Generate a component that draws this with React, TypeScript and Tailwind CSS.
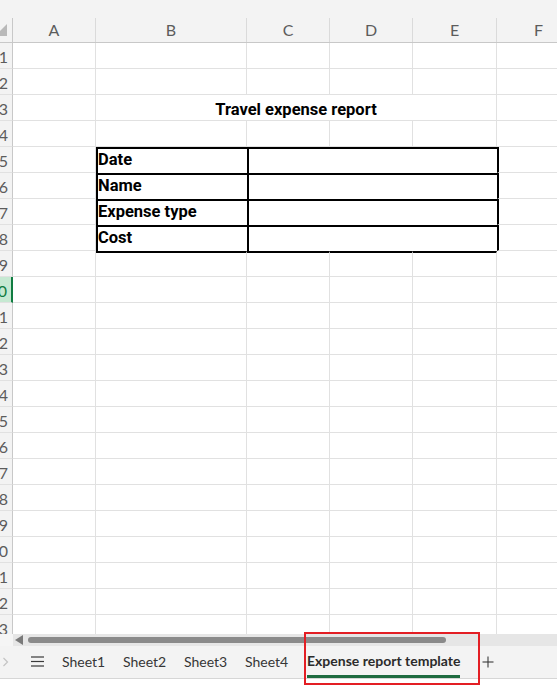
import React from 'react'

// grid geometry (px): row header 13, then A..F
const columns = [
  { letter: 'A', w: 'w-[83px]' },
  { letter: 'B', w: 'w-[151px]' },
  { letter: 'C', w: 'w-[83px]' },
  { letter: 'D', w: 'w-[83px]' },
  { letter: 'E', w: 'w-[84px]' },
  { letter: 'F', w: 'w-[84px]' },
]

const labels: { [row: number]: string } = { 5: 'Date', 6: 'Name', 7: 'Expense type', 8: 'Cost' }

const grid = 'shrink-0 h-full border-b border-r border-[#e1e1e1]'
const cellFont = "font-['Roboto',sans-serif] text-[16.5px] font-bold leading-[20px] text-black"

function RowHead({ n }: { n: number }) {
  const selected = n === 10
  return (
    <div
      className={
        'shrink-0 w-[13px] h-full border-b border-[#e1e1e1] flex items-end justify-end overflow-hidden pb-[3px] pr-[4px] ' +
        (selected
          ? 'bg-[#c6e9d2] text-[#107c41] border-r-2 border-r-[#107c41]'
          : 'bg-[#f3f3f3] text-[#5c5c5c] border-r border-r-[#c8c8c8]')
      }
    >
      <span className="font-['Segoe_UI',Lato,sans-serif] text-[16px] leading-4 whitespace-nowrap">{n}</span>
    </div>
  )
}

function Row({ n }: { n: number }) {
  if (n === 3) {
    return (
      <div className="flex h-[26px]">
        <RowHead n={n} />
        <div className={grid + ' w-[83px]'} />
        <div className={grid + ' w-[401px] flex items-end justify-center'}>
          <span className={cellFont}>Travel expense report</span>
        </div>
        <div className={grid + ' w-[84px]'} />
      </div>
    )
  }

  if (labels[n]) {
    return (
      <div className="flex h-[26px]">
        <RowHead n={n} />
        <div className={grid + ' w-[83px]'} />
        <div className="shrink-0 h-full w-[151px] border-l-2 border-t-2 border-black flex items-end pb-[3px]">
          <span className={cellFont + ' whitespace-nowrap'}>{labels[n]}</span>
        </div>
        <div className="shrink-0 h-full w-[250px] border-l-2 border-t-2 border-black" />
        <div className="shrink-0 h-full w-[84px] border-b border-r border-[#e1e1e1] border-l-2 border-l-black" />
      </div>
    )
  }

  const topLine = n === 9 ? ' border-t-2 border-t-black' : ''
  return (
    <div className="flex h-[26px]">
      <RowHead n={n} />
      {columns.map((c, i) => (
        <div key={c.letter} className={grid + ' ' + c.w + (i >= 1 && i <= 4 ? topLine : '')} />
      ))}
    </div>
  )
}

export default function App() {
  const rows = Array.from({ length: 23 }, (_, i) => i + 1)
  const tabs = ['Sheet1', 'Sheet2', 'Sheet3', 'Sheet4']

  return (
    <div className="relative w-[557px] h-[686px] overflow-hidden bg-white">
      {/* sheet */}
      <div className="h-[634px] overflow-hidden">
        <div className="h-[18px] bg-[#f3f3f3]" />
        <div className="flex h-[25px] bg-[#f3f3f3] border-b border-[#c8c8c8]">
          <div className="shrink-0 w-[13px] h-full border-r border-[#c8c8c8] flex items-center justify-end overflow-hidden pr-[5px]">
            <svg width="12" height="12" viewBox="0 0 12 12" className="shrink-0">
              <polygon points="12,0 12,12 0,12" fill="#b9b9b9" />
            </svg>
          </div>
          {columns.map((c) => (
            <div
              key={c.letter}
              className={'shrink-0 h-full border-r border-[#dadada] flex items-center justify-center ' + c.w}
            >
              <span className="font-['Segoe_UI',Lato,sans-serif] text-[16px] leading-4 text-[#5c5c5c]">{c.letter}</span>
            </div>
          ))}
        </div>
        {rows.map((n) => (
          <Row key={n} n={n} />
        ))}
      </div>

      {/* horizontal scroll bar */}
      <div className="flex h-[12px]">
        <div className="w-[13px] bg-[#f5f5f5]" />
        <div className="flex-1 bg-[#e6e6e6] flex items-center">
          <svg width="8" height="10" viewBox="0 0 8 10" className="ml-[2px]">
            <polygon points="8,0 8,10 0,5" fill="#7a7a7a" />
          </svg>
          <div className="ml-[5px] w-[418px] h-[6px] rounded-full bg-[#8a8a8a]" />
        </div>
      </div>

      {/* sheet tabs */}
      <div className="flex h-[33px] items-stretch bg-[#f3f3f3] border-b border-[#d6d6d6] font-['Segoe_UI',Lato,sans-serif] text-[14px] text-[#363636]">
        <div className="flex items-center pl-[2px]">
          <svg width="7" height="10" viewBox="0 0 7 10">
            <polyline points="1.5,1 5.5,5 1.5,9" fill="none" stroke="#c4c4c4" strokeWidth="1.2" />
          </svg>
        </div>
        <div className="flex items-center ml-[22px] pb-[1px]">
          <svg width="13" height="11" viewBox="0 0 13 11">
            <line x1="0" y1="1" x2="13" y2="1" stroke="#3a3a3a" strokeWidth="1.2" />
            <line x1="0" y1="5.5" x2="13" y2="5.5" stroke="#3a3a3a" strokeWidth="1.2" />
            <line x1="0" y1="10" x2="13" y2="10" stroke="#3a3a3a" strokeWidth="1.2" />
          </svg>
        </div>
        <div className="flex ml-[18px]">
          {tabs.map((t) => (
            <div key={t} className="w-[61px] flex items-center pb-[2px]">
              {t}
            </div>
          ))}
          <div className="w-[176px] flex">
            <div className="flex items-center ml-[1px] border-b-[3px] border-[#1e6b40] font-bold text-[#2b2b2b] whitespace-nowrap">
              Expense report template
            </div>
          </div>
          <div className="flex items-center pb-[1px]">
            <svg width="12" height="12" viewBox="0 0 12 12">
              <line x1="6" y1="0.5" x2="6" y2="11.5" stroke="#3a3a3a" strokeWidth="1.1" />
              <line x1="0.5" y1="6" x2="11.5" y2="6" stroke="#3a3a3a" strokeWidth="1.1" />
            </svg>
          </div>
        </div>
      </div>

      {/* annotation box */}
      <div className="absolute left-[304px] top-[632px] w-[176px] h-[53px] border-2 border-[#e31e24]" />
    </div>
  )
}
